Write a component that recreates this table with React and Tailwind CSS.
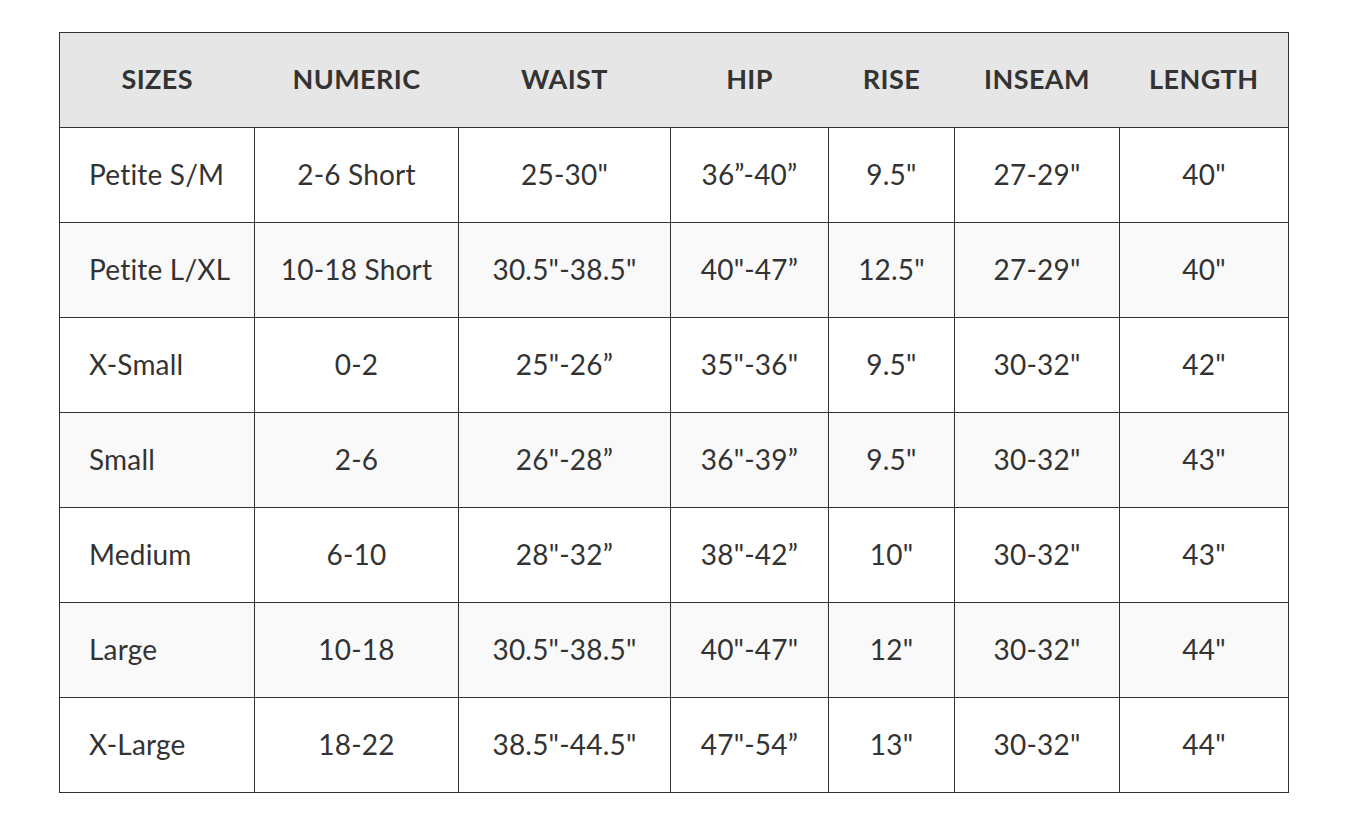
const headers = ['SIZES', 'NUMERIC', 'WAIST', 'HIP', 'RISE', 'INSEAM', 'LENGTH']

const rows = [
  ['Petite S/M', '2-6 Short', '25-30"', '36”-40”', '9.5"', '27-29"', '40"'],
  ['Petite L/XL', '10-18 Short', '30.5"-38.5"', '40"-47”', '12.5"', '27-29"', '40"'],
  ['X-Small', '0-2', '25"-26”', '35"-36"', '9.5"', '30-32"', '42"'],
  ['Small', '2-6', '26"-28”', '36"-39”', '9.5"', '30-32"', '43"'],
  ['Medium', '6-10', '28"-32”', '38"-42”', '10"', '30-32"', '43"'],
  ['Large', '10-18', '30.5"-38.5"', '40"-47"', '12"', '30-32"', '44"'],
  ['X-Large', '18-22', '38.5"-44.5"', '47"-54”', '13"', '30-32"', '44"'],
]

const widths = ['w-[195px]', 'w-[204px]', 'w-[212px]', 'w-[158px]', 'w-[126px]', 'w-[165px]', 'w-[169px]']

export default function App() {
  return (
    <div className="min-h-[831px] w-[1354px] bg-white pt-[32px] pl-[59px] text-[#333333] font-['Lato','Liberation_Sans',sans-serif]">
      <table className="table-fixed border-collapse w-[1230px]">
        <colgroup>
          {widths.map((w, i) => (
            <col key={i} className={w} />
          ))}
        </colgroup>
        <thead>
          <tr className="h-[95px] bg-[#e6e6e6]">
            {headers.map((h) => (
              <th key={h} className="border-x-0 border-y border-[#333333] first:border-l last:border-r pb-[2px] text-[27px] font-bold text-center tracking-[0.4px]">
                {h}
              </th>
            ))}
          </tr>
        </thead>
        <tbody>
          {rows.map((row, r) => (
            <tr key={r} className={r % 2 === 1 ? 'h-[95px] bg-[#f9f9f9]' : 'h-[95px] bg-white'}>
              {row.map((cell, c) => (
                <td
                  key={c}
                  className={
                    c === 0
                      ? 'border border-[#333333] pl-[29px] pb-[3px] text-left text-[28px] tracking-[0.2px]'
                      : 'border border-[#333333] pb-[3px] text-center text-[28px] tracking-[0.2px]'
                  }
                >
                  {cell}
                </td>
              ))}
            </tr>
          ))}
        </tbody>
      </table>
    </div>
  )
}
